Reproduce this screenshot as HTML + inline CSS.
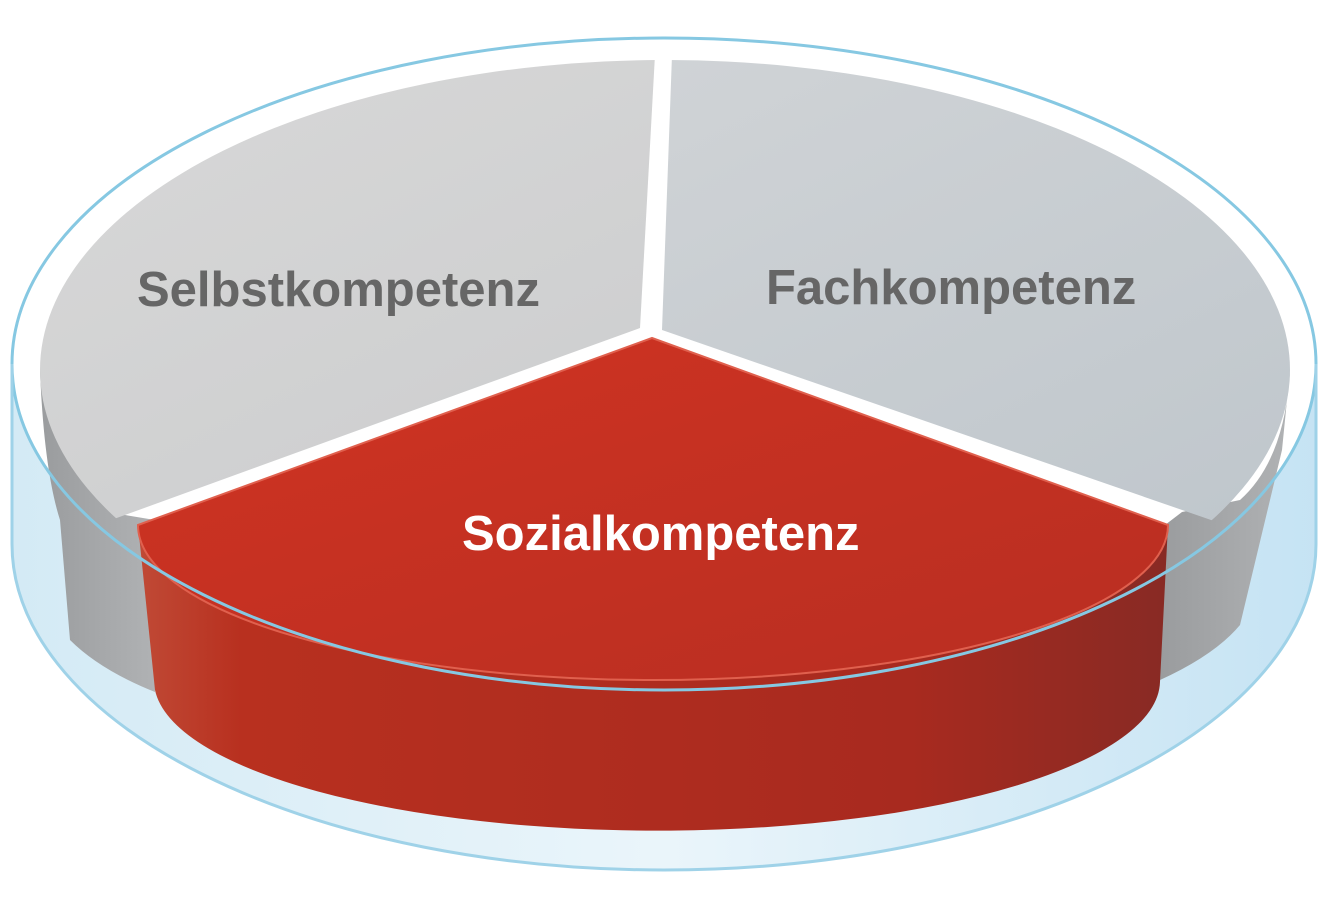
<!DOCTYPE html>
<html><head><meta charset="utf-8"><style>
html,body{margin:0;padding:0;background:#fff;width:1328px;height:909px;overflow:hidden}
svg{display:block}
text{font-family:"Liberation Sans",sans-serif;font-weight:bold;font-size:49px}
</style></head><body>
<svg width="1328" height="909" viewBox="0 0 1328 909" xmlns="http://www.w3.org/2000/svg">
<defs>
<linearGradient id="gl" x1="0" y1="0" x2="1" y2="1"><stop offset="0" stop-color="#d8d8d8"/><stop offset="1" stop-color="#c4c6c8"/></linearGradient>
<linearGradient id="gr" x1="0" y1="0" x2="1" y2="1"><stop offset="0" stop-color="#d6d8da"/><stop offset="1" stop-color="#bcc4ca"/></linearGradient>
<linearGradient id="side" x1="0" y1="0" x2="1" y2="0"><stop offset="0" stop-color="#9a9c9e"/><stop offset="1" stop-color="#b0b2b4"/></linearGradient>
<linearGradient id="rtop" x1="0" y1="0" x2="1" y2="1"><stop offset="0" stop-color="#d03322"/><stop offset="1" stop-color="#b82e22"/></linearGradient>
<linearGradient id="rside" x1="0" y1="0" x2="1" y2="0"><stop offset="0" stop-color="#c04a36"/><stop offset="0.1" stop-color="#b8301f"/><stop offset="0.75" stop-color="#a82a1f"/><stop offset="1" stop-color="#882a24"/></linearGradient>
<linearGradient id="glass" x1="0" y1="0" x2="1" y2="0"><stop offset="0" stop-color="#cfe8f4"/><stop offset="0.5" stop-color="#e8f4fa"/><stop offset="1" stop-color="#bfe0f2"/></linearGradient>
<clipPath id="cl"><polygon points="640,328 658,0 -200,0 -200,633"/></clipPath>
<clipPath id="cr"><polygon points="662,330 674,0 1500,0 1500,620"/></clipPath>
</defs>
<path d="M12 364 L12 544 A652 326 0 0 0 1316 544 L1316 364 A652 326 0 0 1 12 364 Z" fill="url(#glass)" opacity="0.9"/>
<ellipse cx="664" cy="364" rx="652" ry="326" fill="#ffffff"/>
<!-- gray sides -->
<path d="M40 370 Q44 470 60 520 L70 640 Q100 670 155 692 L155 520 L125 515 Q60 460 40 370 Z" fill="url(#side)"/>
<path d="M1290 370 Q1285 460 1240 500 L1182 512 L1165 525 L1160 680 Q1215 655 1240 625 L1282 450 Z" fill="url(#side)"/>
<!-- gray tops -->
<ellipse cx="665" cy="370" rx="625" ry="310" fill="url(#gl)" clip-path="url(#cl)"/>
<ellipse cx="665" cy="370" rx="625" ry="310" fill="url(#gr)" clip-path="url(#cr)"/>
<!-- red slice side -->
<path d="M138 525 A515 155 0 0 0 1168 525 L1160 682 A503 150 0 0 1 155 690 Z" fill="url(#rside)"/>
<path d="M652 338 L1168 525 A515 155 0 0 1 138 525 Z" fill="url(#rtop)" stroke="#e0604e" stroke-width="2"/>
<!-- glass rim -->
<ellipse cx="664" cy="364" rx="652" ry="326" fill="none" stroke="#86c8e2" stroke-width="3"/>
<path d="M12 364 L12 544 A652 326 0 0 0 1316 544 L1316 364" fill="none" stroke="#9fd2e8" stroke-width="3"/>
<text x="137" y="306" fill="#666">Selbstkompetenz</text>
<text x="766" y="304" fill="#666">Fachkompetenz</text>
<text x="462" y="550" fill="#fff">Sozialkompetenz</text>
</svg>
</body></html>
